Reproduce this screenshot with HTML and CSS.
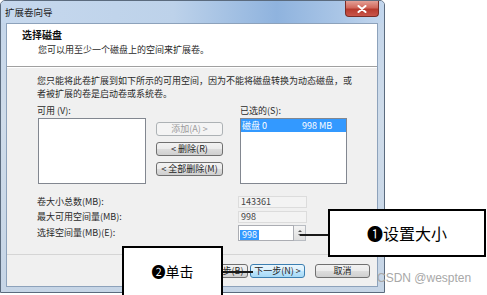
FILE: index.html
```html
<!DOCTYPE html>
<html lang="zh-CN">
<head>
    <meta charset="UTF-8">
    <title>扩展卷向导</title>
    <link rel="stylesheet" href="styles.css">
</head>
<body>
    <div class="page">
        <div class="window">
            <div class="titlebar">
                <span class="title">扩展卷向导</span>
                <div class="close-btn">
                    <svg width="10" height="8" viewBox="0 0 10 8">
                        <path d="M1.5 1 L8.5 7 M8.5 1 L1.5 7" stroke="#fff" stroke-width="2" stroke-linecap="round"/>
                    </svg>
                </div>
            </div>
            <div class="client">
                <div class="header">
                    <div class="header-title">选择磁盘</div>
                    <div class="header-sub">您可以用至少一个磁盘上的空间来扩展卷。</div>
                </div>
                <div class="body">
                    <p class="note">您只能将此卷扩展到如下所示的可用空间，因为不能将磁盘转换为动态磁盘，或<br>者被扩展的卷是启动卷或系统卷。</p>
                    <div class="picker">
                        <div class="col col-left">
                            <div class="label">可用 (V):</div>
                            <div class="listbox"></div>
                        </div>
                        <div class="mid">
                            <button class="btn" disabled>添加(A) &gt;</button>
                            <button class="btn">&lt; 删除(R)</button>
                            <button class="btn">&lt; 全部删除(M)</button>
                        </div>
                        <div class="col col-right">
                            <div class="label">已选的(S):</div>
                            <div class="listbox">
                                <div class="list-row selected"><span class="disk">磁盘 0</span><span>998 MB</span></div>
                            </div>
                        </div>
                    </div>
                    <div class="info">
                        <div class="info-row">
                            <span class="info-label">卷大小总数(MB):</span>
                            <span class="field">143361</span>
                        </div>
                        <div class="info-row">
                            <span class="info-label">最大可用空间量(MB):</span>
                            <span class="field">998</span>
                        </div>
                        <div class="info-row tall">
                            <span class="info-label">选择空间量(MB)(E):</span>
                            <div class="spin">
                                <div class="spin-input"><span class="sel">998</span></div>
                                <div class="spin-btns">
                                    <span class="arrow up"></span>
                                    <span class="arrow down"></span>
                                </div>
                            </div>
                        </div>
                    </div>
                </div>
                <div class="footer">
                    <button class="btn wide">&lt; 上一步(B)</button>
                    <button class="btn wide default">下一步(N) &gt;</button>
                    <button class="btn wide cancel">取消</button>
                </div>
            </div>
        </div>

        <div class="callout callout-size">❶设置大小</div>
        <div class="lead lead-size"></div>
        <div class="callout callout-click">❷单击</div>
        <div class="lead lead-click"></div>
        <div class="watermark">CSDN @wespten</div>
    </div>
</body>
</html>
```

FILE: styles.css
```css
body {
    margin: 0;
    background-color: #ffffff;
    font-family: "Noto Sans CJK SC", sans-serif;
    font-size: 9px;
    color: #2a2a2a;
}

.page {
    position: relative;
    width: 487px;
    height: 295px;
    overflow: hidden;
}

.window {
    width: 385px;
    height: 293px;
    box-sizing: border-box;
    border: 1px solid #5b6b7e;
    border-radius: 5px 5px 0 0;
    background: linear-gradient(to bottom, #c3d5ea, #cfdcea 40%, #c6d5e6);
    display: flex;
    flex-direction: column;
}

.titlebar {
    height: 22px;
    display: flex;
    align-items: center;
    padding-left: 4px;
    background: linear-gradient(to right, #c6d8ed 0%, #bdd2ea 45%, #8fb3de 72%, #a9c5e6 88%, #c4d7ed 100%);
    border-radius: 4px 4px 0 0;
}

.title {
    font-size: 9.5px;
    line-height: 12px;
    color: #1e1e1e;
}

.close-btn {
    margin-left: auto;
    margin-right: 5px;
    align-self: flex-start;
    width: 34px;
    height: 16px;
    box-sizing: border-box;
    border: 1px solid #7a2c25;
    border-top: none;
    border-radius: 0 0 4px 4px;
    background: linear-gradient(to bottom, #e4a096, #d1685c 45%, #b73a2d 55%, #c9554a);
    display: flex;
    align-items: center;
    justify-content: center;
}

.client {
    flex: 1;
    margin: 0 6px 5px 5px;
    border: 1px solid #8da2bb;
    background-color: #f0f0f0;
    display: flex;
    flex-direction: column;
}

.header {
    height: 43px;
    box-sizing: border-box;
    background-color: #ffffff;
    border-bottom: 1px solid #a0a0a0;
    box-shadow: 0 1px 0 #ffffff;
    padding: 5px 0 0 15px;
}

.header-title {
    font-weight: bold;
    font-size: 10px;
    line-height: 12px;
    color: #111;
}

.header-sub {
    margin-top: 3px;
    padding-left: 16px;
    line-height: 12px;
}

.body {
    flex: 1;
    padding-left: 30px;
}

.note {
    margin: 7px 0 0 0;
    line-height: 13px;
}

.picker {
    display: flex;
    margin-top: 6px;
}

.label {
    line-height: 10px;
    height: 10px;
    margin-bottom: 2px;
}

.col-left {
    width: 109px;
}

.col-left .listbox {
    margin-left: 1px;
    width: 108px;
}

.col-right {
    width: 107px;
}

.listbox {
    height: 66px;
    box-sizing: border-box;
    border: 1px solid #828790;
    background-color: #ffffff;
}

.list-row {
    height: 13px;
    display: flex;
    align-items: center;
    padding-left: 1px;
    line-height: 13px;
}

.list-row .disk {
    width: 60px;
}

.selected {
    background-color: #3399ff;
    color: #ffffff;
}

.mid {
    width: 67px;
    margin: 0 17px 0 10px;
    padding-top: 16px;
    display: flex;
    flex-direction: column;
    gap: 6px;
}

.btn {
    height: 14px;
    padding: 0;
    box-sizing: border-box;
    border: 1px solid #707070;
    border-radius: 3px;
    background: linear-gradient(to bottom, #f2f2f2 0%, #ebebeb 50%, #dddddd 51%, #cfcfcf 100%);
    font-family: "Noto Sans CJK SC", sans-serif;
    font-size: 9px;
    line-height: 12px;
    color: #1e1e1e;
}

.btn:disabled {
    border-color: #adb2b5;
    background: #f4f4f4;
    color: #9a9a9a;
}

.info {
    margin-top: 10px;
}

.info-row {
    height: 15px;
    display: flex;
    align-items: center;
}

.info-row.tall {
    height: 17px;
}

.info-label {
    width: 201px;
    line-height: 12px;
}

.field {
    width: 69px;
    height: 12px;
    box-sizing: border-box;
    border: 1px solid #dcdcdc;
    background-color: #f3f3f3;
    padding-left: 2px;
    line-height: 10px;
    color: #444;
}

.spin {
    display: flex;
    height: 16px;
}

.spin-input {
    width: 56px;
    box-sizing: border-box;
    border: 1px solid #abadb3;
    background-color: #ffffff;
    padding: 2px 0 0 1px;
}

.sel {
    display: inline-block;
    background-color: #3399ff;
    color: #ffffff;
    line-height: 10px;
    padding: 0 2px;
}

.spin-btns {
    width: 12px;
    box-sizing: border-box;
    border: 1px solid #b8bcc2;
    border-left: none;
    background: linear-gradient(to bottom, #f4f4f4, #dedede);
    display: flex;
    flex-direction: column;
    align-items: center;
    justify-content: center;
    gap: 2px;
}

.arrow {
    width: 0;
    height: 0;
    border-left: 2px solid transparent;
    border-right: 2px solid transparent;
}

.arrow.up {
    border-bottom: 2px solid #555;
}

.arrow.down {
    border-top: 2px solid #555;
}

.footer {
    height: 32px;
    box-sizing: border-box;
    border-top: 1px solid #d5d5d5;
    display: flex;
    align-items: center;
    justify-content: flex-end;
    padding-right: 7px;
    gap: 2px;
}

.btn.wide {
    width: 55px;
}

.btn.default {
    border-color: #3c7fb1;
    background: linear-gradient(to bottom, #eaf6fd 0%, #d9f0fc 50%, #bee6fd 51%, #a7d9f5 100%);
}

.btn.cancel {
    margin-left: 8px;
}

.callout {
    position: absolute;
    box-sizing: border-box;
    border: 2px solid #000000;
    background-color: #ffffff;
    display: flex;
    align-items: center;
    justify-content: center;
    color: #000000;
}

.callout-size {
    left: 328px;
    top: 209px;
    width: 158px;
    height: 48px;
    font-size: 16px;
}

.callout-click {
    left: 122px;
    top: 246px;
    width: 101px;
    height: 54px;
    padding-bottom: 4px;
    font-size: 14px;
}

.lead {
    position: absolute;
    height: 2px;
    background-color: #1a1a1a;
}

.lead-size {
    left: 300px;
    top: 234px;
    width: 28px;
}

.lead-click {
    left: 223px;
    top: 271px;
    width: 30px;
}

.watermark {
    position: absolute;
    left: 377px;
    top: 271px;
    font-family: "Liberation Sans", sans-serif;
    font-size: 12px;
    color: #a8a8a8;
}
```
